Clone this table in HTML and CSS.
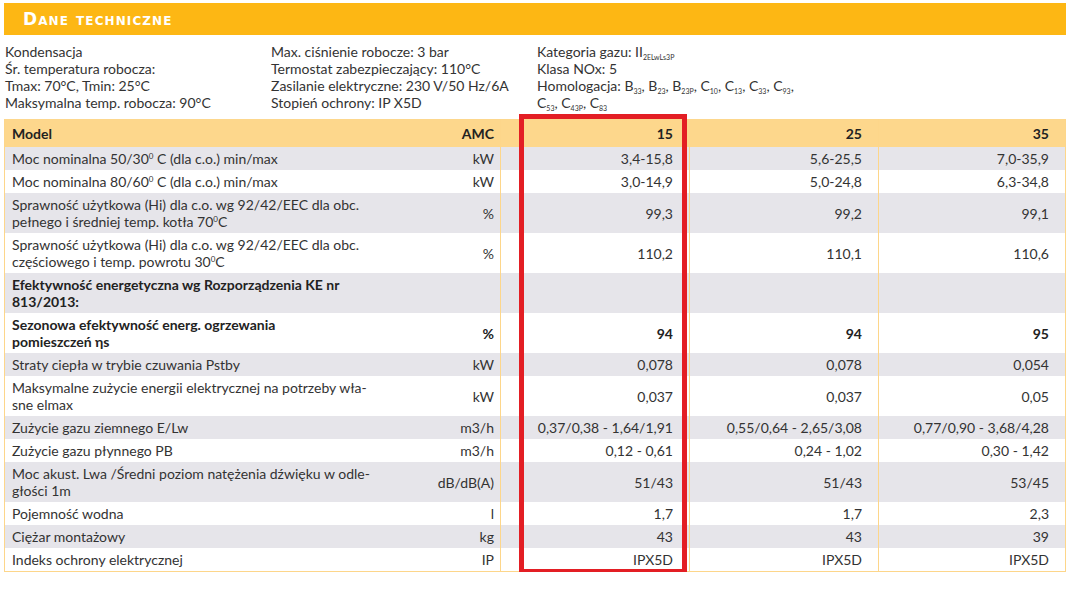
FILE: index.html
```html
<!DOCTYPE html>
<html lang="pl">
<head>
<meta charset="utf-8">
<title>Dane techniczne</title>
<link rel="stylesheet" href="styles.css">
</head>
<body>
<div class="page">
  <div class="title-bar"><h1 class="title">Dane techniczne</h1></div>
  <div class="info">
    <div class="info-col">
      Kondensacja<br>
      Śr. temperatura robocza:<br>
      Tmax: 70°C, Tmin: 25°C<br>
      Maksymalna temp. robocza: 90°C
    </div>
    <div class="info-col">
      Max. ciśnienie robocze: 3 bar<br>
      Termostat zabezpieczający: 110°C<br>
      Zasilanie elektryczne: 230 V/50 Hz/6A<br>
      Stopień ochrony: IP X5D
    </div>
    <div class="info-col">
      Kategoria gazu: II<sub>2ELwLs3P</sub><br>
      Klasa NOx: 5<br>
      Homologacja: B<sub>33</sub>, B<sub>23</sub>, B<sub>23P</sub>, C<sub>10</sub>, C<sub>13</sub>, C<sub>33</sub>, C<sub>93</sub>,<br>
      C<sub>53</sub>, C<sub>43P</sub>, C<sub>83</sub>
    </div>
  </div>
  <div class="table-wrap">
    <table class="spec">
      <colgroup>
        <col class="c-label"><col class="c-unit"><col class="c-val"><col class="c-val"><col class="c-val3">
      </colgroup>
      <thead>
        <tr><th class="lbl">Model</th><th class="unit">AMC</th><th>15</th><th>25</th><th>35</th></tr>
      </thead>
      <tbody>
        <tr><td class="lbl">Moc nominalna 50/30<sup>0</sup> C (dla c.o.) min/max</td><td class="unit">kW</td><td>3,4-15,8</td><td>5,6-25,5</td><td>7,0-35,9</td></tr>
        <tr><td class="lbl">Moc nominalna 80/60<sup>0</sup> C (dla c.o.) min/max</td><td class="unit">kW</td><td>3,0-14,9</td><td>5,0-24,8</td><td>6,3-34,8</td></tr>
        <tr><td class="lbl">Sprawność użytkowa (Hi) dla c.o. wg 92/42/EEC dla obc.<br>pełnego i średniej temp. kotła 70<sup>0</sup>C</td><td class="unit">%</td><td>99,3</td><td>99,2</td><td>99,1</td></tr>
        <tr><td class="lbl">Sprawność użytkowa (Hi) dla c.o. wg 92/42/EEC dla obc.<br>częściowego i temp. powrotu 30<sup>0</sup>C</td><td class="unit">%</td><td>110,2</td><td>110,1</td><td>110,6</td></tr>
        <tr class="bold"><td class="lbl">Efektywność energetyczna wg Rozporządzenia KE nr<br>813/2013:</td><td class="unit"></td><td></td><td></td><td></td></tr>
        <tr class="bold"><td class="lbl">Sezonowa efektywność energ. ogrzewania<br>pomieszczeń ηs</td><td class="unit">%</td><td>94</td><td>94</td><td>95</td></tr>
        <tr><td class="lbl">Straty ciepła w trybie czuwania Pstby</td><td class="unit">kW</td><td>0,078</td><td>0,078</td><td>0,054</td></tr>
        <tr><td class="lbl">Maksymalne zużycie energii elektrycznej na potrzeby wła-<br>sne elmax</td><td class="unit">kW</td><td>0,037</td><td>0,037</td><td>0,05</td></tr>
        <tr><td class="lbl">Zużycie gazu ziemnego E/Lw</td><td class="unit">m3/h</td><td>0,37/0,38 - 1,64/1,91</td><td>0,55/0,64 - 2,65/3,08</td><td>0,77/0,90 - 3,68/4,28</td></tr>
        <tr><td class="lbl">Zużycie gazu płynnego PB</td><td class="unit">m3/h</td><td>0,12 - 0,61</td><td>0,24 - 1,02</td><td>0,30 - 1,42</td></tr>
        <tr><td class="lbl">Moc akust. Lwa /Średni poziom natężenia dźwięku w odle-<br>głości 1m</td><td class="unit">dB/dB(A)</td><td>51/43</td><td>51/43</td><td>53/45</td></tr>
        <tr><td class="lbl">Pojemność wodna</td><td class="unit">l</td><td>1,7</td><td>1,7</td><td>2,3</td></tr>
        <tr><td class="lbl">Ciężar montażowy</td><td class="unit">kg</td><td>43</td><td>43</td><td>39</td></tr>
        <tr><td class="lbl">Indeks ochrony elektrycznej</td><td class="unit">IP</td><td>IPX5D</td><td>IPX5D</td><td>IPX5D</td></tr>
      </tbody>
    </table>
    <div class="highlight"></div>
  </div>
</div>
</body>
</html>
```

FILE: styles.css
```css
html, body {
  margin: 0;
  padding: 0;
  background: #ffffff;
}

body {
  font-family: "Lato", "Open Sans", sans-serif;
  font-size: 14px;
  color: #333333;
}

.page {
  width: 1062px;
  padding: 3px 0 0 4px;
}

.title-bar {
  background: #fdb714;
  height: 32px;
  display: flex;
  align-items: center;
  padding-left: 19px;
}

.title {
  margin: 0;
  font-family: "DejaVu Sans", sans-serif;
  font-size: 17px;
  font-weight: 700;
  font-variant: small-caps;
  color: #ffffff;
  line-height: 1;
  letter-spacing: 1.1px;
}

.info {
  display: grid;
  grid-template-columns: 266px 266px 1fr;
  padding: 8px 0 0 1px;
  height: 76px;
  line-height: 17px;
}

.info sub {
  font-size: 7px;
  line-height: 0;
  vertical-align: -3px;
}

.table-wrap {
  position: relative;
}

.spec {
  width: 1062px;
  border-collapse: collapse;
  table-layout: fixed;
  border-left: 1px solid #fdd68a;
  border-right: 1px solid #fdd68a;
  border-bottom: 1px solid #fdd68a;
}

.c-label { width: 420px; }
.c-unit { width: 76px; }
.c-val { width: 189px; }
.c-val3 { width: auto; }

.spec th,
.spec td {
  padding: 3px 16px 3px 0;
  line-height: 17px;
  text-align: right;
  vertical-align: middle;
  border-right: 1px solid #fdd68a;
}

.spec th.lbl,
.spec td.lbl {
  text-align: left;
  padding-left: 7px;
  padding-right: 0;
  border-right: none;
}

.spec th.unit,
.spec td.unit {
  padding-right: 6px;
}

.spec thead th {
  background: #fdd78c;
  font-weight: 700;
  height: 22px;
  color: #222222;
}

.spec tbody tr:nth-child(odd) {
  background: #e6e5ea;
}

.spec tbody tr.bold td {
  font-weight: 700;
  color: #222222;
}

.spec sup {
  font-size: 8px;
  line-height: 0;
  vertical-align: 5px;
}

.highlight {
  position: absolute;
  left: 515px;
  top: -5px;
  width: 158px;
  height: 450px;
  border: 5px solid #e31e24;
  pointer-events: none;
}
```
